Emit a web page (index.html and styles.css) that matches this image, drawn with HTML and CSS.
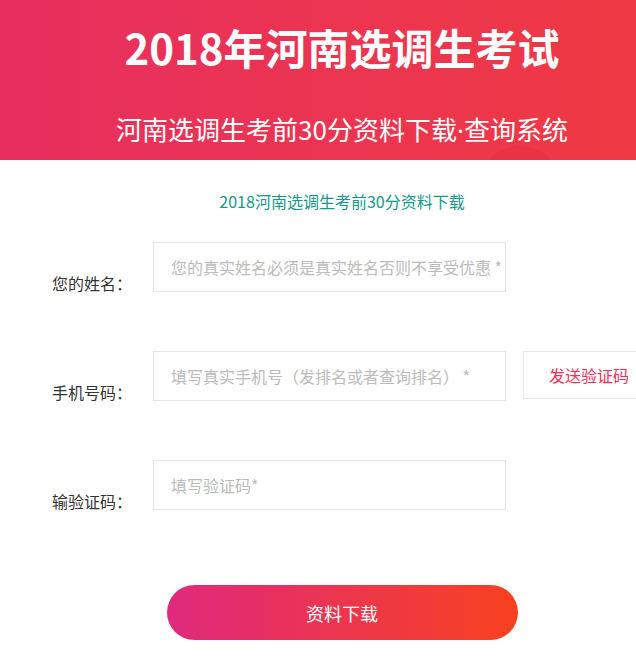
FILE: index.html
```html
<!DOCTYPE html>
<html>
<head>
    <title>2018年河南选调生考试</title>
    <meta name="viewport" content="width=device-width, initial-scale=1.0">
    <link rel="stylesheet" href="styles.css">
</head>
<body>
    <div id="page">
        <div class="banner">
            <h1>2018年河南选调生考试</h1>
            <p class="sub">河南选调生考前30分资料下载<span class="dot">·</span>查询系统</p>
            <span class="blob"></span>
        </div>

        <p class="intro">2018河南选调生考前30分资料下载</p>

        <div class="row">
            <label for="uname">您的姓名：</label>
            <input type="text" id="uname" placeholder="您的真实姓名必须是真实姓名否则不享受优惠 *">
        </div>

        <div class="row">
            <label for="phone">手机号码：</label>
            <input type="text" id="phone" placeholder="填写真实手机号（发排名或者查询排名） *">
            <button class="send">发送验证码</button>
        </div>

        <div class="row">
            <label for="code">输验证码：</label>
            <input type="text" id="code" placeholder="填写验证码*">
        </div>

        <div class="submit-wrap">
            <button class="submit">资料下载</button>
        </div>
    </div>
</body>
</html>
```

FILE: styles.css
```css
body {
    font-family: "Noto Sans CJK SC", "Noto Sans", sans-serif;
    background-color: #fff;
    margin: 0;
    padding: 0;
    overflow: hidden;
}
#page {
    width: 684px;
}
.banner {
    position: relative;
    height: 160px;
    background: linear-gradient(90deg, #e72f60, #f03a41);
    color: #fff;
    text-align: center;
    overflow: hidden;
}
.banner h1 {
    margin: 0;
    padding-top: 15px;
    font-size: 42px;
    line-height: 64px;
    font-weight: bold;
}
.banner .sub {
    margin: 0;
    padding-top: 32px;
    font-size: 26px;
    line-height: 36px;
}
.dot {
    font-family: "Noto Sans", sans-serif;
}
.blob {
    position: absolute;
    left: 478px;
    top: 146px;
    width: 84px;
    height: 84px;
    border-radius: 50%;
    background: rgba(200, 20, 50, 0.12);
}
.intro {
    margin: 30px 0 0;
    text-align: center;
    color: #14998a;
    font-size: 16px;
    line-height: 22px;
}
.row {
    display: flex;
    align-items: flex-end;
    margin-top: 30px;
    height: 50px;
}
.row + .row {
    margin-top: 59px;
}
label {
    width: 101px;
    padding-left: 52px;
    margin-bottom: -1px;
    font-size: 16px;
    line-height: 20px;
    color: #333;
}
input[type="text"] {
    box-sizing: border-box;
    width: 353px;
    height: 50px;
    padding: 0 0 0 17px;
    border: 1px solid #e6e6e6;
    font-family: inherit;
    font-size: 16px;
    color: #333;
    outline: none;
}
input::placeholder {
    color: #bbb;
}
.send {
    box-sizing: border-box;
    align-self: flex-start;
    margin-left: 17px;
    width: 140px;
    height: 48px;
    padding: 0 0 0 25px;
    text-align: left;
    border: 1px solid #e6e6e6;
    background: #fff;
    color: #f0305a;
    font-family: inherit;
    font-size: 16px;
}
.submit-wrap {
    display: flex;
    justify-content: center;
    margin-top: 75px;
}
.submit {
    width: 351px;
    height: 55px;
    border: none;
    border-radius: 28px;
    background: linear-gradient(90deg, #df2a7d, #f8411f);
    color: #fff;
    font-family: inherit;
    font-size: 18px;
}
```
